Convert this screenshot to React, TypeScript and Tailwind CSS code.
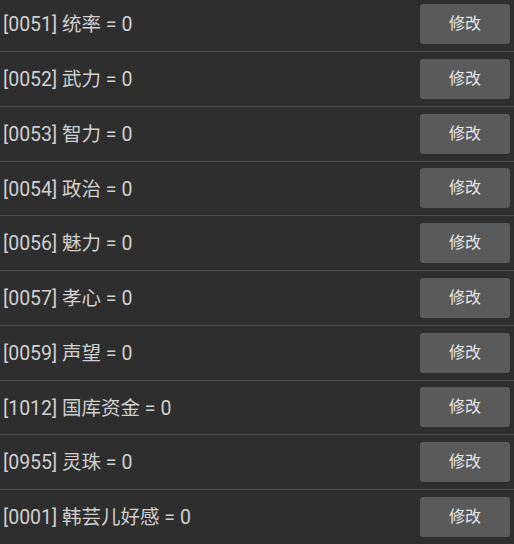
import React from "react";

const rows = [
  "[0051] 统率 = 0",
  "[0052] 武力 = 0",
  "[0053] 智力 = 0",
  "[0054] 政治 = 0",
  "[0056] 魅力 = 0",
  "[0057] 孝心 = 0",
  "[0059] 声望 = 0",
  "[1012] 国库资金 = 0",
  "[0955] 灵珠 = 0",
  "[0001] 韩芸儿好感 = 0",
];

export default function App() {
  return (
    <div
      className="w-[514px] h-[544px] overflow-hidden bg-[#2e2e2e]"
      style={{ fontFamily: 'Roboto, "Noto Sans CJK SC", sans-serif' }}
    >
      <div className="-mt-[2.75px]">
        {rows.map((r) => (
          <div
            key={r}
            className="h-[54.75px] flex items-center justify-between border-b border-[#4a4a4a] pl-[3px] pr-[4px]"
          >
            <span className="text-[19.5px] text-[#d0d0d0] leading-none pt-[2px]">{r}</span>
            <button className="w-[90px] h-[40px] rounded-[3px] bg-[#5a5a5a] text-[#e6e6e6] text-[16px] leading-none">
              修改
            </button>
          </div>
        ))}
      </div>
    </div>
  );
}
